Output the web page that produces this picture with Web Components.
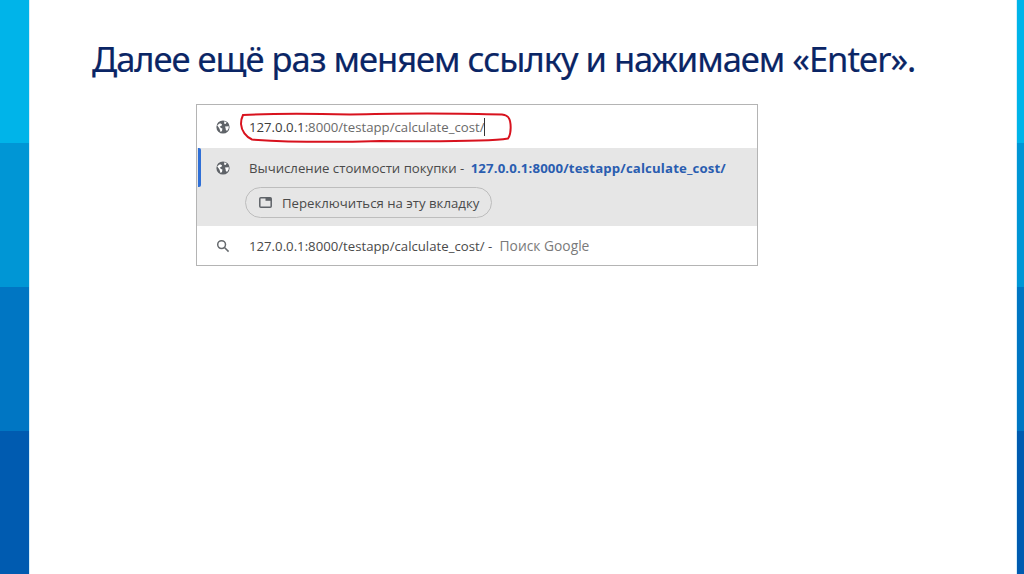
<!DOCTYPE html>
<html lang="ru">
<head>
<meta charset="utf-8">
<title>Slide</title>
<style>
html, body { margin: 0; padding: 0; background: #fff; }
body { width: 1024px; height: 574px; overflow: hidden; }
</style>
</head>
<body>
<slide-page>
    <side-band slot="left" style="--w: 29px"></side-band>
    <slide-title>Далее ещё раз меняем ссылку и нажимаем «Enter».</slide-title>
    <omni-box>
        <omni-row kind="input" icon="globe"><span style="color:#3c3c3c">127.0.0.1</span><span style="color:#6a6a6a">:8000/testapp/calculate_cost/</span></omni-row>
        <omni-row kind="selected" icon="globe">
            <span style="color:#4a4a4a">Вычисление стоимости покупки - </span><b style="color:#2a5db0;font-weight:700;letter-spacing:.15px;margin-left:3px">127.0.0.1:8000/testapp/calculate_cost/</b>
            <tab-chip slot="extra">Переключиться на эту вкладку</tab-chip>
        </omni-row>
        <omni-row kind="plain" icon="search">
            <span style="color:#4a4a4a">127.0.0.1:8000/testapp/calculate_cost/ - </span><span style="color:#7a7a7a;font-size:13.8px;margin-left:4px">Поиск Google</span>
        </omni-row>
    </omni-box>
    <side-band slot="right" style="--w: 7px"></side-band>
</slide-page>

<script>
const ICONS = {
    globe: `<svg width="14" height="14" viewBox="0 0 14 14"><circle cx="7" cy="7" r="6.6" fill="#5f6368"/><path d="M1.2 5.2 4 3.2 6 4.2 5.4 6 3.6 6.4 5 8 6.4 8.4 6 11 4.6 12 3.4 8.6ZM8.4 1.2 10.6 2.2 9.6 4 8 3.4ZM9 6.4 12.8 6.2 12.6 8.6 11 11 9.8 9.8 9.6 8.2Z" fill="#fff"/></svg>`,
    search: `<svg width="14" height="14" viewBox="0 0 14 14" fill="none" stroke="#666a6e" stroke-width="1.5"><circle cx="5.6" cy="5.6" r="3.9"/><path d="M8.5 8.5 12.6 12.6"/></svg>`,
    tab: `<svg width="13" height="11" viewBox="0 0 13 11" fill="none"><rect x="0.8" y="0.8" width="11.4" height="9.4" rx="1" stroke="#5f6368" stroke-width="1.5"/><rect x="6.5" y="0.8" width="5.7" height="3" fill="#5f6368"/></svg>`
};

class SlidePage extends HTMLElement {
    constructor() {
        super();
        this.attachShadow({mode: "open"}).innerHTML = `
            <style>
            :host { display: grid; grid-template-columns: 29px 1fr 7px; width: 1024px; height: 574px; }
            .main { display: flex; flex-direction: column; align-items: flex-start; min-width: 0; }
            </style>
            <slot name="left"></slot>
            <div class="main"><slot></slot></div>
            <slot name="right"></slot>
        `;
    }
}

class SideBand extends HTMLElement {
    constructor() {
        super();
        this.attachShadow({mode: "open"}).innerHTML = `
            <style>
            :host { display: grid; grid-template-rows: 143px 144px 144px 143px; width: var(--w); height: 574px; box-shadow: 1px 0 0 rgba(120,200,240,.3), -1px 0 0 rgba(120,200,240,.3); }
            div:nth-of-type(1) { background: #00b4e9; }
            div:nth-of-type(2) { background: #0096d5; }
            div:nth-of-type(3) { background: #0076c3; }
            div:nth-of-type(4) { background: #005bb0; }
            </style>
            <div></div><div></div><div></div><div></div>
        `;
    }
}

class SlideTitle extends HTMLElement {
    constructor() {
        super();
        this.attachShadow({mode: "open"}).innerHTML = `
            <style>
            :host { display: block; margin: 37px 0 0 63px; color: #0a2565; white-space: nowrap;
                font: 34.5px/43px "Noto Sans", sans-serif; letter-spacing: -1px; -webkit-text-stroke: .2px #0a2565; }
            </style>
            <slot></slot>
        `;
    }
}

class OmniBox extends HTMLElement {
    constructor() {
        super();
        this.attachShadow({mode: "open"}).innerHTML = `
            <style>
            :host { display: block; position: relative; box-sizing: border-box; width: 562px; height: 162px; margin: 24px 0 0 167px;
                border: 1px solid #b4b4b4; background: #fff; color: #4a4a4a;
                font: 13.2px/18px "Open Sans", sans-serif; }
            svg.ring { position: absolute; left: 43px; top: 7px; }
            </style>
            <slot></slot>
            <svg class="ring" width="274" height="32" viewBox="0 0 274 32" fill="none">
                <path d="M3 3C30 1.5 70 1.5 110 2.5C150 1 225 1 262 2.5C268 3 270 6 270.5 12C271 18 270.5 23 268 26.5C250 29.5 190 29.5 140 29C90 30.5 40 29.5 12 27.5C6 25 1.5 19 1 12C1 8 2 5 3 3Z" stroke="#d8121e" stroke-width="2"/>
            </svg>
        `;
    }
}

class OmniRow extends HTMLElement {
    constructor() {
        super();
        const kind = this.getAttribute("kind");
        const heights = {input: 43, selected: 78, plain: 39};
        this.attachShadow({mode: "open"}).innerHTML = `
            <style>
            :host { display: block; position: relative; box-sizing: border-box; height: ${heights[kind]}px; padding-left: 18px;
                background: ${kind === "selected" ? "#e6e6e6" : "#fff"}; }
            .line { display: flex; align-items: center; gap: 18px; height: ${kind === "selected" ? 39 : heights[kind]}px; white-space: nowrap; }
            .icon { display: flex; width: 16px; justify-content: center; flex: none; }
            .mark { display: ${kind === "selected" ? "block" : "none"}; position: absolute; left: 1px; top: 0; width: 3px; height: 39px; background: #2f6fd6; border-radius: 0 2px 2px 0; }
            .extra { padding-left: 30px; }
            .caret { display: ${kind === "input" ? "inline-block" : "none"}; width: 1px; height: 18px; background: #333; vertical-align: -4px; }
            </style>
            <span class="mark"></span>
            <div class="line"><span class="icon">${ICONS[this.getAttribute("icon")]}</span><span><slot></slot><span class="caret"></span></span></div>
            <div class="extra"><slot name="extra"></slot></div>
        `;
    }
}

class TabChip extends HTMLElement {
    constructor() {
        super();
        this.attachShadow({mode: "open"}).innerHTML = `
            <style>
            :host { display: inline-flex; align-items: center; gap: 10px; box-sizing: border-box; height: 31px; padding: 0 12px 0 13px; 
                border: 1px solid #bdbdbd; border-radius: 16px; color: #4a4a4a; white-space: nowrap; }
            svg { flex: none; }
            </style>
            ${ICONS.tab}<slot></slot>
        `;
    }
}

customElements.define("slide-page", SlidePage);
customElements.define("side-band", SideBand);
customElements.define("slide-title", SlideTitle);
customElements.define("omni-box", OmniBox);
customElements.define("omni-row", OmniRow);
customElements.define("tab-chip", TabChip);
</script>
</body>
</html>
